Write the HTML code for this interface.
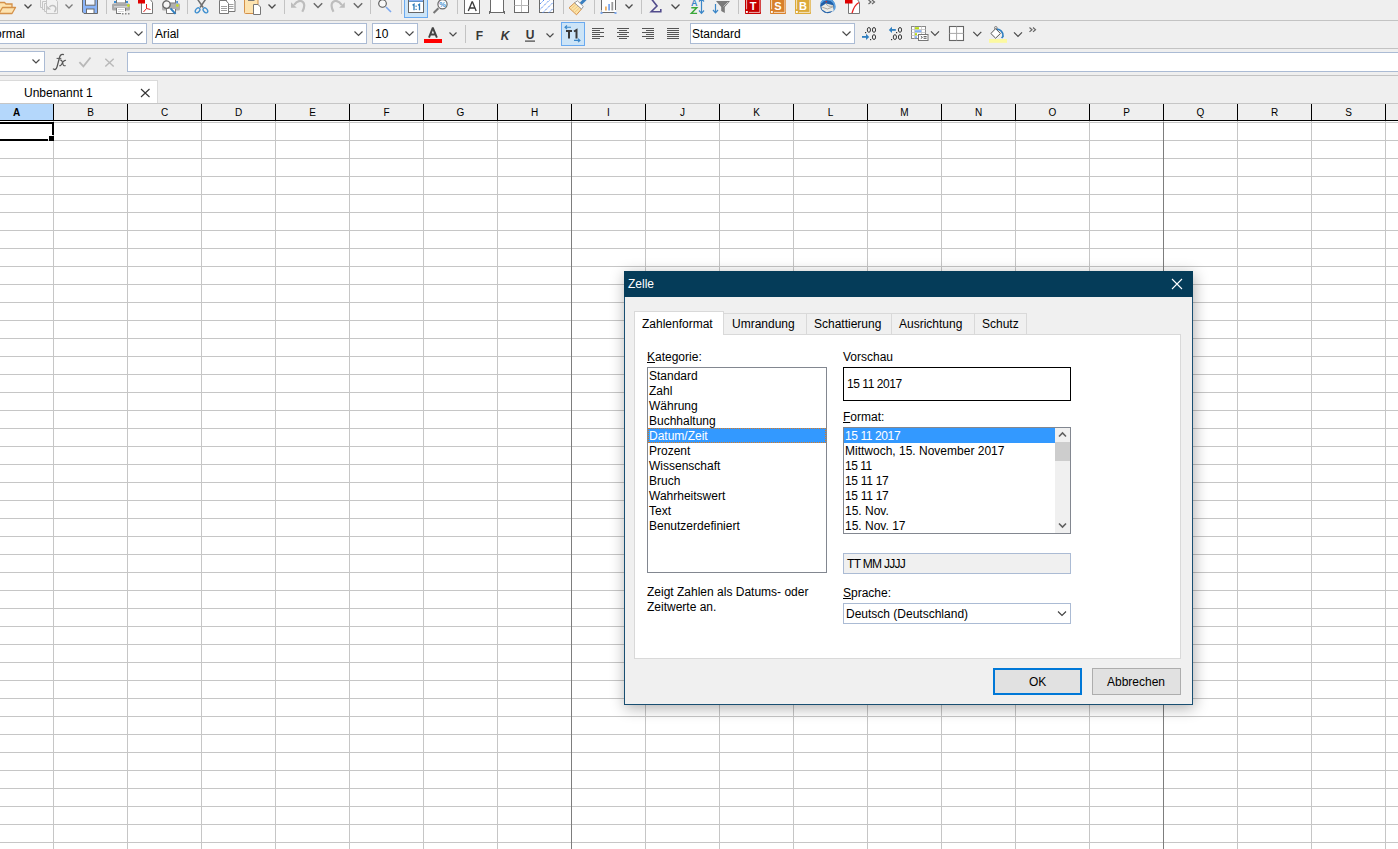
<!DOCTYPE html>
<html><head><meta charset="utf-8">
<style>
*{margin:0;padding:0;box-sizing:border-box}
html,body{width:1398px;height:849px;overflow:hidden;background:#efefef;font-family:"Liberation Sans",sans-serif;font-size:12px;color:#000}
.a{position:absolute}
.t{position:absolute;white-space:nowrap;line-height:15px;margin-top:1px}
.hl{position:absolute;height:1px;background:#c3c3c3}
.vsep{position:absolute;width:1px;background:#c3c3c3}
.cb{position:absolute;background:#fff;border:1px solid #abbbd4}
.chev{position:absolute;width:10px;height:6px}
/* grid */
#grid{position:absolute;left:0;top:121px;width:1398px;height:728px;background-color:#fff;
 background-image:linear-gradient(to right,#c6c6c6 1px,transparent 1px),linear-gradient(to bottom,#c6c6c6 1px,transparent 1px);
 background-size:74px 18px,74px 18px;background-position:53px 0,0 1px}
.colh{position:absolute;top:105px;height:15px;width:73px;text-align:center;font-size:10px;line-height:16px;color:#000}
.colsep{position:absolute;top:104px;height:16px;width:1px;background:#000}
/* dialog */
#dlg{position:absolute;left:624px;top:271px;width:569px;height:434px;background:#f0f0f0;border:1px solid #194f72;
 box-shadow:1px 3px 14px rgba(0,0,0,0.32)}

.tab{position:absolute;top:42px;height:21px;background:#f0f0f0;border:1px solid #d9d9d9;border-bottom:none}
.lst{position:absolute;background:#fff;border:1px solid #828790}
.sel{background:#3399ff;color:#fff}
.btn{position:absolute;background:#e1e1e1;border:1px solid #adadad;text-align:center}
</style></head><body>

<!-- toolbar lines -->
<div class="hl" style="left:0;top:20px;width:1398px"></div>
<div class="hl" style="left:0;top:48px;width:1398px"></div>
<div class="hl" style="left:0;top:75px;width:1398px"></div>

<!-- toolbar 2 comboboxes -->
<div class="cb" style="left:-4px;top:23px;width:151px;height:21px"></div>
<div class="t" style="left:-5px;top:26px">ormal</div>
<div class="cb" style="left:152px;top:23px;width:215px;height:21px"></div>
<div class="t" style="left:155px;top:26px">Arial</div>
<div class="cb" style="left:372px;top:23px;width:46px;height:21px"></div>
<div class="t" style="left:375px;top:26px">10</div>
<div class="cb" style="left:690px;top:23px;width:165px;height:21px"></div>
<div class="t" style="left:692px;top:26px">Standard</div>

<!-- formula bar -->
<div class="cb" style="left:-4px;top:51px;width:49px;height:21px"></div>
<div class="cb" style="left:127px;top:52px;width:1280px;height:20px"></div>

<!-- sheet tab -->
<div class="a" style="left:-2px;top:80px;width:160px;height:23px;background:#fff;border:1px solid #dadada;border-bottom:none"></div>
<div class="t" style="left:24px;top:85px">Unbenannt 1</div>

<!-- TBSVG --><svg class="a" style="left:0;top:0" width="1398" height="100" viewBox="0 0 1398 100" shape-rendering="geometricPrecision">
<!-- ===== toolbar 1 ===== -->
<!-- folder -->
<path d="M-1 12V2.5h5.5l1.5 1.5h6v3.5" fill="#fde3b0" stroke="#d4914a" stroke-width="1.3"/>
<path d="M-1 13.5L2.5 7.5h13l-3.5 6z" fill="#fde3b0" stroke="#d4914a" stroke-width="1.3" stroke-linejoin="round"/>
<path d="M24.5 4.5l3.5 3.5 3.5-3.5" fill="none" stroke="#4a4a4a" stroke-width="1.3"/>
<!-- templates (disabled) -->
<g fill="#f2f2f2" stroke="#c6c6c6" stroke-width="1">
<path d="M40.5 -2V7.5h6V-2"/>
<path d="M42.5 1.5V9.5h6.5V1.5z"/>
<path d="M44.5 3.5V11.5h6V3.5z"/>
<path d="M46.5 -2V13.5H57.5V1.5L54.5 -2z"/>
</g>
<path d="M49.5 7C51 5.3 53.5 5 55 6.5C56.5 8 56 10.5 54.3 11.8" fill="none" stroke="#c0c0c0" stroke-width="1.6"/>
<path d="M47.2 5.8V9.6H51Z" fill="#c0c0c0"/>
<path d="M65.5 4.5l3.5 3.5 3.5-3.5" fill="none" stroke="#7a7a7a" stroke-width="1.3"/>
<!-- save -->
<path d="M82.5 -1v13l1.5 1.5h13.5v-14.5" fill="#8ab4f8" stroke="#6a6a6a" stroke-width="1"/>
<rect x="85.5" y="-1" width="9.5" height="6.2" fill="#f2f6fd" stroke="#6a6a6a" stroke-width="1"/>
<rect x="86.5" y="9" width="7.5" height="4.5" fill="#fff" stroke="#6a6a6a" stroke-width="1"/>
<rect x="106" y="0" width="1" height="14" fill="#c3c3c3"/>
<!-- printer -->
<rect x="116.5" y="-2" width="9" height="5" fill="#fff" stroke="#777" stroke-width="1"/>
<rect x="114" y="1" width="2" height="2" fill="#3a8fd6"/><rect x="126" y="1" width="2" height="2" fill="#3a8fd6"/>
<rect x="112" y="3.5" width="18" height="7" rx="1.5" fill="#a9a9a9"/>
<rect x="114" y="6" width="14" height="1.5" fill="#d0d0d0"/>
<circle cx="128.3" cy="5.5" r="1.3" fill="#c7e21a"/>
<path d="M116.5 8v5.5h4.5M125.5 8v3" fill="#fff" stroke="#777" stroke-width="1"/>
<rect x="117" y="8" width="8" height="5" fill="#fff"/><path d="M116.5 8v5.5h4.5M125.5 8v3.2" fill="none" stroke="#777" stroke-width="1"/>
<path d="M118 9.5h6M118 11.5h6" stroke="#cfcfcf" stroke-width="0.8"/>
<rect x="122" y="13" width="1.5" height="1.5" fill="#888"/><rect x="125" y="13" width="1.5" height="1.5" fill="#888"/><rect x="128" y="13" width="1.5" height="1.5" fill="#888"/>
<!-- pdf -->
<path d="M141.5 -1v14.5h11v-11l-2.5-3.5z" fill="#fff" stroke="#777" stroke-width="1"/>
<rect x="138" y="-1" width="7" height="4.5" fill="#e00000"/>
<path d="M146.5 4v4.5M146.5 8.5l-3 3.5M146.5 8.5l4 1" fill="none" stroke="#e52020" stroke-width="1"/>
<!-- print preview -->
<rect x="162" y="3.2" width="18" height="7.3" rx="1.5" fill="#b0b0b0"/>
<rect x="166" y="-2" width="9.5" height="5" fill="#fff" stroke="#777" stroke-width="1"/>
<rect x="176.3" y="1" width="1.6" height="2.2" fill="#3a86d6"/>
<circle cx="177.4" cy="5.5" r="1.3" fill="#c7e21a"/>
<path d="M166.5 9v4.5h9V9" fill="#fff" stroke="#777" stroke-width="1"/>
<circle cx="166.5" cy="4.6" r="3.7" fill="#f6f6f6" stroke="#666" stroke-width="1.3"/>
<path d="M170.5 8.3l5 5.5" stroke="#2f7fc0" stroke-width="2"/>
<rect x="187" y="0" width="1" height="14" fill="#c3c3c3"/>
<!-- scissors -->
<path d="M197.4 -1L203.2 7.5M205.8 -1L200 7.5" stroke="#6e6e6e" stroke-width="1.5"/>
<ellipse cx="197.6" cy="10.3" rx="1.9" ry="2.8" fill="none" stroke="#3f8fcf" stroke-width="1.3" transform="rotate(40 197.6 10.3)"/>
<ellipse cx="205.4" cy="10.3" rx="1.9" ry="2.8" fill="none" stroke="#3f8fcf" stroke-width="1.3" transform="rotate(-40 205.4 10.3)"/>
<!-- copy -->
<path d="M226.5 -1v12.5h8.5v-10.5l-2-2z" fill="#fff" stroke="#777" stroke-width="1"/>
<path d="M228.5 4.5h5M228.5 6.5h5M228.5 8.5h5" stroke="#888" stroke-width="0.8"/>
<path d="M219.5 0.5v13h9v-10l-2.5-3z" fill="#fff" stroke="#777" stroke-width="1"/>
<path d="M221 6.5h6M221 8.5h6M221 10.5h6" stroke="#888" stroke-width="0.8"/>
<!-- paste -->
<rect x="244.5" y="-2" width="13.5" height="15.5" rx="1" fill="#fde3b0" stroke="#d4914a" stroke-width="1"/>
<rect x="248" y="-2" width="6.5" height="3" fill="#777"/>
<path d="M253.5 4.5v10h7v-7.5l-2.5-2.5z" fill="#fff" stroke="#777" stroke-width="1"/>
<path d="M268.5 4.5l3.5 3.5 3.5-3.5" fill="none" stroke="#4a4a4a" stroke-width="1.3"/>
<rect x="284" y="0" width="1" height="14" fill="#c3c3c3"/>
<!-- undo/redo disabled -->
<path d="M291 2.3V7.8H296.8Z" fill="#bdbdbd"/>
<path d="M294 5C296 2 298.5 0.8 300.5 1C304.5 1.5 305.5 6 302.3 11.7" fill="none" stroke="#bdbdbd" stroke-width="2.2"/>
<path d="M313.8 3.3l4.2 4.2 4.2-4.2" fill="none" stroke="#6a6a6a" stroke-width="1.5"/>
<path d="M344.8 2.3V7.8H339Z" fill="#bdbdbd"/>
<path d="M341.8 5C339.8 2 337.3 0.8 335.3 1C331.3 1.5 330.3 6 333.5 11.7" fill="none" stroke="#bdbdbd" stroke-width="2.2"/>
<path d="M353.8 3.3l4.2 4.2 4.2-4.2" fill="none" stroke="#6a6a6a" stroke-width="1.5"/>
<rect x="370" y="0" width="1" height="14" fill="#c3c3c3"/>
<!-- find -->
<circle cx="382.5" cy="3.5" r="3.8" fill="#f8f8f8" stroke="#555" stroke-width="1.1"/>
<path d="M386 7l5 5" stroke="#7aa7ef" stroke-width="1.6"/>
<rect x="401" y="0" width="1" height="14" fill="#c3c3c3"/>
<!-- 1:1 highlighted -->
<rect x="404.5" y="-2" width="23" height="19.5" fill="#cce4f7" stroke="#6aaaf0" stroke-width="1"/>
<rect x="408.5" y="-1" width="15" height="13.5" fill="#fff" stroke="#666" stroke-width="1"/>
<rect x="409" y="-1" width="14" height="2" fill="#8ab0f4"/><rect x="409" y="1" width="14" height="0.8" fill="#3a78b8"/>
<path d="M412.5 5.3l1.5-1v6M418 5.3l1.5-1v6" fill="none" stroke="#2a78b8" stroke-width="1.3"/>
<rect x="415.5" y="5.6" width="1.2" height="1.2" fill="#2a78b8"/><rect x="415.5" y="8.8" width="1.2" height="1.2" fill="#2a78b8"/>
<!-- zoom -->
<path d="M433.6 13l4.8-4.8" stroke="#777" stroke-width="2"/>
<circle cx="442.5" cy="4.3" r="4.6" fill="#fff" stroke="#6a6a6a" stroke-width="1.2"/>
<text x="442.6" y="7.3" font-family="Liberation Sans" font-size="7.5" font-weight="bold" fill="#3f8fcf" text-anchor="middle">%</text>
<rect x="457" y="0" width="1" height="14" fill="#c3c3c3"/>
<!-- textbox -->
<rect x="464.5" y="-1" width="15" height="14.5" fill="#fff" stroke="#6a6a6a" stroke-width="1"/>
<path d="M468.3 11L472 2h0.5L476.2 11M469.6 8h5.4" fill="none" stroke="#3a3a3a" stroke-width="1.3"/>
<!-- image frame -->
<rect x="490.5" y="-1" width="13" height="13.5" fill="#fff" stroke="#6a6a6a" stroke-width="1"/>
<path d="M489 12.5h16M489.5 11v3M504.5 11v3" stroke="#6a6a6a" stroke-width="1"/>
<!-- table -->
<rect x="514.5" y="-1" width="14" height="13.5" fill="#fff" stroke="#6a6a6a" stroke-width="1"/>
<path d="M521.5 -1v13M514.5 5.5h14" stroke="#b8b8b8" stroke-width="1"/>
<!-- hatch -->
<rect x="539.5" y="-1" width="14" height="13.5" fill="#fff" stroke="#6a6a6a" stroke-width="1"/>
<path d="M540 4l5-5M540 9.5l10.5-10.5M542.5 13l11-11M548.5 13l5-5" stroke="#5a90f0" stroke-width="1" stroke-dasharray="1.5 0.6"/>
<rect x="563" y="0" width="1" height="14" fill="#c3c3c3"/>
<!-- brush -->
<path d="M580 4.5L586 -1.5" stroke="#3a7fc0" stroke-width="3"/>
<path d="M569 7.8L575 2.5L581.5 9L576.5 14.8Z" fill="#fde3a7" stroke="#d4914a" stroke-width="1"/>
<path d="M571.5 8.5l5-4.5M573 10.5l5-4.5M574.5 12.5l5-4.5" stroke="#e9c17a" stroke-width="0.8"/>
<path d="M574.5 2.8L577.5 0.8L583.3 6.5L581.5 9Z" fill="#fff" stroke="#9a9a9a" stroke-width="1"/>
<rect x="594" y="0" width="1" height="14" fill="#c3c3c3"/>
<!-- chart -->
<path d="M601.5 0v12.5h14v-12.5" fill="none" stroke="#6a6a6a" stroke-width="1"/>
<rect x="601.5" y="0" width="14.5" height="12" fill="#fff"/>
<path d="M601.5 -1v11M615.5 -1v11M603 12.5h11" stroke="#6a6a6a" stroke-width="1"/>
<rect x="605" y="6.5" width="1.8" height="4" fill="#f0b060"/><rect x="608.2" y="4" width="1.8" height="6.5" fill="#7aa7ef"/><rect x="611.4" y="2" width="1.8" height="8.5" fill="#999"/>
<rect x="600.5" y="12" width="2" height="2" fill="#7aa7ef"/><rect x="614.5" y="12" width="2" height="2" fill="#7aa7ef"/>
<path d="M625.5 4.5l3.5 3.5 3.5-3.5" fill="none" stroke="#4a4a4a" stroke-width="1.3"/>
<rect x="641" y="0" width="1" height="14" fill="#c3c3c3"/>
<!-- sigma -->
<path d="M651.5 -1.5h9M651.5 -1L657 6L651.2 11.8H660.8V9" fill="none" stroke="#524c8c" stroke-width="1.6" stroke-linejoin="miter"/>
<path d="M671.5 4.5l4 4 4-4" fill="none" stroke="#4a4a4a" stroke-width="1.3"/>
<!-- sort -->
<text x="694.2" y="5.6" font-family="Liberation Sans" font-size="9" font-weight="bold" fill="#3a86c8" text-anchor="middle">A</text>
<path d="M691.3 7.8h5.5l-5.5 5.6h5.8" fill="none" stroke="#3aa83a" stroke-width="1.4"/>
<path d="M701.5 -1v14M699 10.5l2.5 2.8 2.5-2.8M699 1.5l2.5-2.8 2.5 2.8" fill="none" stroke="#3a86c8" stroke-width="1.2"/>
<!-- filter -->
<path d="M715.5 4v8.5M713 10l2.5 2.8 2.5-2.8" fill="none" stroke="#3a86c8" stroke-width="1.2"/>
<path d="M716 1h14l-5.2 6v6l-3.6-2v-4z" fill="#7a7a7a"/>
<path d="M723.5 6.5l4.5-4.5" stroke="#d8d8d8" stroke-width="0.7"/>
<rect x="738" y="0" width="1" height="14" fill="#c3c3c3"/>
<!-- T S B -->
<rect x="745" y="-1" width="16" height="15" rx="0.8" fill="#c40000"/>
<rect x="745.9" y="11" width="1.9" height="1.9" fill="#fff"/><path d="M746.6 -1V9.3M748.9 12.4H759.9V-1" fill="none" stroke="#fff" stroke-width="0.7"/>
<text x="753" y="10" font-family="Liberation Sans" font-size="11" font-weight="bold" fill="#fff" text-anchor="middle">T</text>
<rect x="770" y="-1" width="16" height="15" rx="0.8" fill="#d8802a"/>
<rect x="770.9" y="11" width="1.9" height="1.9" fill="#fff"/><path d="M771.6 -1V9.3M773.9 12.4H784.9V-1" fill="none" stroke="#fff" stroke-width="0.7"/>
<text x="778" y="10" font-family="Liberation Sans" font-size="11" font-weight="bold" fill="#fff" text-anchor="middle">S</text>
<rect x="795" y="-1" width="16" height="15" rx="0.8" fill="#dcaa3a"/>
<rect x="795.9" y="11" width="1.9" height="1.9" fill="#fff"/><path d="M796.6 -1V9.3M798.9 12.4H809.9V-1" fill="none" stroke="#fff" stroke-width="0.7"/>
<text x="803" y="10" font-family="Liberation Sans" font-size="11" font-weight="bold" fill="#fff" text-anchor="middle">B</text>
<!-- thunderbird -->
<circle cx="827.6" cy="5.8" r="7.4" fill="#1f5fa8"/>
<path d="M821 3C823 -1 830 -2 833.5 2.5C835.5 5.5 835 9 833 11" fill="none" stroke="#5aa0e0" stroke-width="1.6"/>
<path d="M821.3 6.5L826 3.5L833.2 5.2L833.6 10.8L826.5 12.3L822 9.5Z" fill="#ecebe6"/>
<path d="M822.2 7.2L827.5 9L833 6.8M826 3.5C827 6 829.5 7 833 6" fill="none" stroke="#9a968c" stroke-width="0.8"/>
<circle cx="826.3" cy="1.8" r="0.8" fill="#d03030"/>
<!-- pdf2 -->
<path d="M848.5 -1v14.5h11v-11l-2.5-3.5z" fill="#fff" stroke="#777" stroke-width="1"/>
<rect x="845" y="-1" width="7.5" height="4.5" fill="#e00000"/>
<path d="M852 13c1.5-5 4-9 7-10.5" fill="none" stroke="#e52020" stroke-width="1.3"/>
<path d="M868.5 0l2.5 2-2.5 2M872 0l2.5 2-2.5 2" fill="none" stroke="#666" stroke-width="1.2"/>

<!-- ===== toolbar 2 ===== -->
<path d="M134.5 31.5l4 4 4-4" fill="none" stroke="#4a4a4a" stroke-width="1.2"/>
<path d="M354.5 31.5l4 4 4-4" fill="none" stroke="#4a4a4a" stroke-width="1.2"/>
<path d="M405.5 31.5l4 4 4-4" fill="none" stroke="#4a4a4a" stroke-width="1.2"/>
<path d="M842.5 31.5l4 4 4-4" fill="none" stroke="#4a4a4a" stroke-width="1.2"/>
<!-- font color -->
<path d="M429 37.7L432.6 28.3h0.4L436.9 37.7M430.2 34.5h5.5" fill="none" stroke="#444" stroke-width="1.9"/>
<rect x="424" y="39" width="18" height="4" fill="#f00"/>
<path d="M449.5 32.5l3.5 3.5 3.5-3.5" fill="none" stroke="#4a4a4a" stroke-width="1.2"/>
<rect x="465" y="25" width="1" height="18" fill="#c3c3c3"/>
<text x="479.5" y="40" font-family="Liberation Sans" font-size="12" font-weight="bold" fill="#383838" text-anchor="middle">F</text>
<text x="505" y="40" font-family="Liberation Sans" font-size="12" font-weight="bold" font-style="italic" fill="#383838" text-anchor="middle">K</text>
<text x="530" y="39" font-family="Liberation Sans" font-size="12" font-weight="bold" fill="#383838" text-anchor="middle">U</text>
<rect x="525" y="40.5" width="10" height="1.2" fill="#444"/>
<path d="M546.5 33.5l3.5 3.5 3.5-3.5" fill="none" stroke="#4a4a4a" stroke-width="1.2"/>
<!-- T1 -->
<rect x="561.5" y="22.5" width="23" height="23" fill="#cce4f7" stroke="#6aaaf0" stroke-width="1"/>
<path d="M566 31h6M569 31v7.5" stroke="#3a3a3a" stroke-width="2"/>
<path d="M574 31.5l2.5-1.5v8.5" fill="none" stroke="#3a3a3a" stroke-width="2"/>
<path d="M565 27.3h6M567 25.5l-2 1.8 2 1.8M574 40.4h6M578 38.6l2 1.8-2 1.8" fill="none" stroke="#3a86c8" stroke-width="1.1"/>
<!-- align -->
<g stroke="#555" stroke-width="1.1">
<path d="M592 28.5h12M592 30.5h8M592 32.5h12M592 34.5h8M592 36.5h12M592 38.5h8"/>
<path d="M617 28.5h12M619 30.5h8M617 32.5h12M619 34.5h8M617 36.5h12M619 38.5h8"/>
<path d="M642 28.5h12M646 30.5h8M642 32.5h12M646 34.5h8M642 36.5h12M646 38.5h8"/>
<path d="M667 28.5h12M667 30.5h12M667 32.5h12M667 34.5h12M667 36.5h12M667 38.5h12"/>
</g>
<!-- number formats -->
<g fill="none" stroke="#333" stroke-width="1">
<ellipse cx="868.9" cy="29.9" rx="1.6" ry="2.4"/><ellipse cx="874" cy="29.9" rx="1.6" ry="2.4"/>
<ellipse cx="874" cy="37.1" rx="1.6" ry="2.4"/>
<ellipse cx="900" cy="29.9" rx="1.6" ry="2.4"/>
<ellipse cx="894.9" cy="37.1" rx="1.6" ry="2.4"/><ellipse cx="900" cy="37.1" rx="1.6" ry="2.4"/>
</g>
<g fill="#333"><rect x="865" y="32" width="1.2" height="1.2"/><rect x="870" y="39" width="1.2" height="1.2"/><rect x="896" y="32" width="1.2" height="1.2"/><rect x="891" y="39" width="1.2" height="1.2"/></g>
<path d="M862 36.9h5" stroke="#2f7fc0" stroke-width="1.8"/><path d="M866 33.8l3.2 3.1-3.2 3.1z" fill="#2f7fc0"/>
<path d="M895.8 29.9h-5" stroke="#2f7fc0" stroke-width="1.8"/><path d="M892 26.8l-3.2 3.1 3.2 3.1z" fill="#2f7fc0"/>
<!-- conditional -->
<rect x="911.5" y="26.5" width="14" height="12" fill="#fff" stroke="#888" stroke-width="1"/>
<path d="M911.5 29.5h14M911.5 32.5h14M911.5 35.5h14M914.5 26.5v12M921.5 26.5v12" stroke="#c4c4c4" stroke-width="0.8"/>
<rect x="915" y="27.2" width="4" height="2" fill="#b8dc10"/><rect x="915" y="30.2" width="6.3" height="2" fill="#82b0f6"/>
<rect x="915" y="33.2" width="2" height="2" fill="#b8dc10"/><rect x="915" y="36.2" width="2" height="2" fill="#82b0f6"/>
<rect x="918.5" y="34.5" width="9.5" height="6" fill="#fff" stroke="#777" stroke-width="1"/>
<path d="M920.8 36.2l1.6 1.2-1.6 1.2M923.6 36.6h3M923.6 38.3h3" fill="none" stroke="#444" stroke-width="0.9"/>
<path d="M931 31.3l4 4 4-4" fill="none" stroke="#4a4a4a" stroke-width="1.2"/>
<!-- borders -->
<rect x="949.5" y="26.5" width="14" height="14" fill="#fff" stroke="#666" stroke-width="1.1"/>
<path d="M956.6 26.5v14M949.5 33.4h14" stroke="#a8a8a8" stroke-width="1"/>
<path d="M973.3 31.8l4 4 4-4" fill="none" stroke="#4a4a4a" stroke-width="1.2"/>
<!-- bg color -->
<circle cx="995.8" cy="27.8" r="1.3" fill="none" stroke="#666" stroke-width="0.8"/>
<path d="M990.9 33.5L995.6 28.7L1000.4 33.5L995.6 38.2Z" fill="#fff" stroke="#555" stroke-width="1"/>
<path d="M997 29.2C1000 29.5 1003.5 31.5 1003 36.5L1001.6 38" fill="none" stroke="#2f7fc0" stroke-width="1.7"/>
<rect x="989" y="39" width="18" height="3.8" fill="#fcf9a0"/>
<path d="M1014 32.3l4 4 4-4" fill="none" stroke="#4a4a4a" stroke-width="1.2"/>
<path d="M1029.5 27.5l2.5 2.2-2.5 2.2M1033 27.5l2.5 2.2-2.5 2.2" fill="none" stroke="#666" stroke-width="1.2"/>

<!-- ===== formula bar ===== -->
<path d="M32.5 59.5l3.5 3.5 3.5-3.5" fill="none" stroke="#4a4a4a" stroke-width="1.2"/>
<path d="M53 68.6C54.6 70.3 56.3 69.6 57.1 66.6L59.6 57.2C60.4 54.6 62 53.8 63.9 54.7" fill="none" stroke="#555" stroke-width="1.3"/>
<path d="M56.6 58.4H61.3" stroke="#555" stroke-width="1"/>
<path d="M59.8 60.2C61 59.6 61.8 60.5 62.3 62L63.2 64.8C63.6 65.8 64.5 66.1 65.6 65.4M65.9 60.5C64.8 59.8 63.8 60.8 62.8 62.3L61.5 64.5C60.8 65.7 60 66 59.3 65.5" fill="none" stroke="#555" stroke-width="1.15"/>
<path d="M79.4 62.2L83.4 66.4L90.5 57.5" fill="none" stroke="#b8b8b8" stroke-width="1.8"/>
<path d="M105.3 58.8L113.7 66.6M113.7 58.8L105.3 66.6" stroke="#b8b8b8" stroke-width="1.4"/>
<!-- sheet tab close -->
<path d="M141 89l8.5 8M149.5 89l-8.5 8" stroke="#333" stroke-width="1.1"/>
</svg>
<!-- /TBSVG -->
<!-- column header -->
<div class="a" style="left:0;top:103px;width:1398px;height:1px;background:#c6c6c6"></div>
<div class="a" style="left:0;top:104px;width:53px;height:16px;background:#b4d7fb"></div>
<div class="a" style="left:0;top:120px;width:1398px;height:1px;background:#000"></div>
<div class="colh" style="left:-20px;width:73px;font-weight:bold">A</div>
<div class="colh" style="left:54px">B</div>
<div class="colh" style="left:128px">C</div>
<div class="colh" style="left:202px">D</div>
<div class="colh" style="left:276px">E</div>
<div class="colh" style="left:350px">F</div>
<div class="colh" style="left:424px">G</div>
<div class="colh" style="left:498px">H</div>
<div class="colh" style="left:572px">I</div>
<div class="colh" style="left:646px">J</div>
<div class="colh" style="left:720px">K</div>
<div class="colh" style="left:794px">L</div>
<div class="colh" style="left:868px">M</div>
<div class="colh" style="left:942px">N</div>
<div class="colh" style="left:1016px">O</div>
<div class="colh" style="left:1090px">P</div>
<div class="colh" style="left:1164px">Q</div>
<div class="colh" style="left:1238px">R</div>
<div class="colh" style="left:1312px">S</div>
<div class="colsep" style="left:53px"></div>
<div class="colsep" style="left:127px"></div>
<div class="colsep" style="left:201px"></div>
<div class="colsep" style="left:275px"></div>
<div class="colsep" style="left:349px"></div>
<div class="colsep" style="left:423px"></div>
<div class="colsep" style="left:497px"></div>
<div class="colsep" style="left:571px"></div>
<div class="colsep" style="left:645px"></div>
<div class="colsep" style="left:719px"></div>
<div class="colsep" style="left:793px"></div>
<div class="colsep" style="left:867px"></div>
<div class="colsep" style="left:941px"></div>
<div class="colsep" style="left:1015px"></div>
<div class="colsep" style="left:1089px"></div>
<div class="colsep" style="left:1163px"></div>
<div class="colsep" style="left:1237px"></div>
<div class="colsep" style="left:1311px"></div>
<div class="colsep" style="left:1385px"></div>

<div id="grid"></div>
<div class="a" style="left:571px;top:122px;width:1px;height:727px;background:#7d7d7d"></div>
<div class="a" style="left:1163px;top:122px;width:1px;height:727px;background:#7d7d7d"></div>

<!-- cell cursor -->
<div class="a" style="left:0;top:122px;width:54px;height:2px;background:#000"></div>
<div class="a" style="left:52px;top:122px;width:2px;height:13px;background:#000"></div>
<div class="a" style="left:0;top:139px;width:48px;height:2px;background:#000"></div>
<div class="a" style="left:49px;top:136px;width:5px;height:5px;background:#000"></div>

<!-- dialog -->
<div id="dlg"></div>
<div class="a" style="left:624px;top:271px;width:569px;height:26px;background:#053c59"></div>
<div class="t" style="left:628px;top:276px;color:#fff">Zelle</div>
<svg class="a" style="left:1171px;top:278px" width="12" height="12" viewBox="0 0 12 12"><path d="M1 1L11 11M11 1L1 11" stroke="#fff" stroke-width="1.1"/></svg>
<!-- tab page -->
<div class="a" style="left:634px;top:334px;width:547px;height:325px;background:#fff;border:1px solid #d9d9d9"></div>
<div class="tab" style="left:723px;top:313px;width:84px"></div>
<div class="tab" style="left:806px;top:313px;width:86px"></div>
<div class="tab" style="left:891px;top:313px;width:84px"></div>
<div class="tab" style="left:974px;top:313px;width:53px"></div>
<div class="a" style="left:634px;top:311px;width:90px;height:24px;background:#fff;border:1px solid #d9d9d9;border-bottom:none"></div>
<div class="t" style="left:642px;top:316px">Zahlenformat</div>
<div class="t" style="left:732px;top:316px">Umrandung</div>
<div class="t" style="left:814px;top:316px">Schattierung</div>
<div class="t" style="left:899px;top:316px">Ausrichtung</div>
<div class="t" style="left:982px;top:316px">Schutz</div>

<div class="t" style="left:647px;top:349px"><u>K</u>ategorie:</div>
<div class="lst" style="left:647px;top:367px;width:180px;height:206px"></div>
<div class="a sel" style="left:648px;top:428px;width:178px;height:15px;outline:1px dotted #dc7a1e;outline-offset:-1px"></div>
<div class="t" style="left:649px;top:368px">Standard<br>Zahl<br>Währung<br>Buchhaltung<br><span style="color:#fff">Datum/Zeit</span><br>Prozent<br>Wissenschaft<br>Bruch<br>Wahrheitswert<br>Text<br>Benutzerdefiniert</div>

<div class="t" style="left:843px;top:349px">Vorschau</div>
<div class="a" style="left:843px;top:367px;width:228px;height:34px;background:#fff;border:1px solid #000"></div>
<div class="t" style="left:847px;top:376px;letter-spacing:-0.45px">15 11 2017</div>

<div class="t" style="left:843px;top:409px"><u>F</u>ormat:</div>
<div class="lst" style="left:843px;top:427px;width:228px;height:107px"></div>
<div class="a sel" style="left:844px;top:428px;width:211px;height:15px"></div>
<div class="a" style="left:1055px;top:428px;width:15px;height:105px;background:#f0f0f0"></div>
<div class="a" style="left:1055px;top:442px;width:15px;height:19px;background:#cdcdcd"></div>
<svg class="a" style="left:1058px;top:431px" width="9" height="7" viewBox="0 0 9 7"><path d="M1 5.5L4.5 2L8 5.5" stroke="#606060" stroke-width="1.6" fill="none"/></svg>
<svg class="a" style="left:1058px;top:522px" width="9" height="7" viewBox="0 0 9 7"><path d="M1 1.5L4.5 5L8 1.5" stroke="#606060" stroke-width="1.6" fill="none"/></svg>
<div class="t" style="left:845px;top:428px"><span style="color:#fff;letter-spacing:-0.4px">15 11 2017</span><br>Mittwoch, 15. November 2017<br><span style="letter-spacing:-0.5px">15 11</span><br><span style="letter-spacing:-0.3px">15 11 17<br>15 11 17</span><br>15. Nov.<br>15. Nov. 17</div>

<div class="a" style="left:843px;top:553px;width:228px;height:21px;background:#f0f0f0;border:1px solid #abbbd4"></div>
<div class="t" style="left:847px;top:556px;letter-spacing:-0.7px">TT MM JJJJ</div>

<div class="t" style="left:843px;top:585px"><u>S</u>prache:</div>
<div class="cb" style="left:843px;top:603px;width:228px;height:21px"></div>
<div class="t" style="left:846px;top:606px">Deutsch (Deutschland)</div>
<svg class="a" style="left:1057px;top:610px" width="10" height="7" viewBox="0 0 10 7"><path d="M1 1.5L5 5.5L9 1.5" stroke="#404040" stroke-width="1.1" fill="none"/></svg>

<div class="t" style="left:647px;top:584px">Zeigt Zahlen als Datums- oder<br>Zeitwerte an.</div>

<div class="btn" style="left:993px;top:668px;width:89px;height:27px;border:2px solid #0078d7"></div>
<div class="t" style="left:1029px;top:674px">OK</div>
<div class="btn" style="left:1092px;top:668px;width:89px;height:27px"></div>
<div class="t" style="left:1107px;top:674px">Abbrechen</div>
</body></html>
